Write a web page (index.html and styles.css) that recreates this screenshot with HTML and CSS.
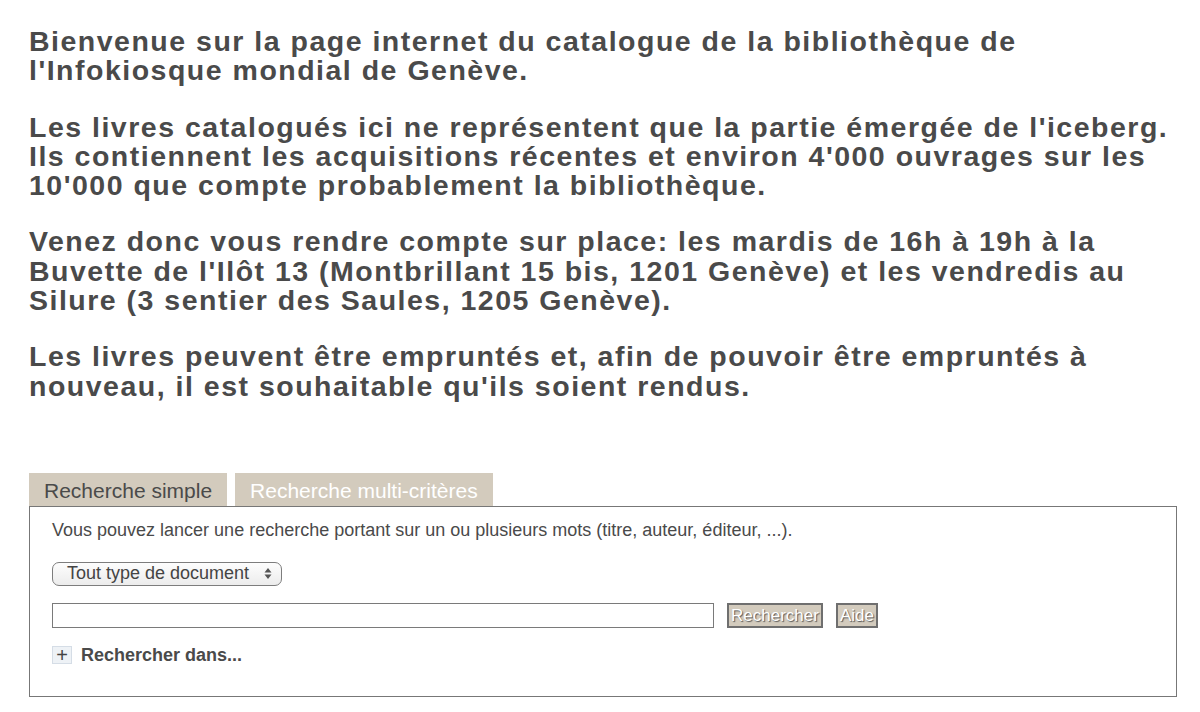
FILE: index.html
```html
<!DOCTYPE html>
<html>
<head>
    <meta charset="UTF-8">
    <link rel="stylesheet" href="styles.css">
</head>
<body>
    <div class="intro">
        <p>Bienvenue sur la page internet du catalogue de la bibliothèque de l'Infokiosque mondial de Genève.</p>
        <p>Les livres catalogués ici ne représentent que la partie émergée de l'iceberg. Ils contiennent les acquisitions récentes et environ 4'000 ouvrages sur les 10'000 que compte probablement la bibliothèque.</p>
        <p>Venez donc vous rendre compte sur place: les mardis de 16h à 19h à la Buvette de l'Ilôt 13 (Montbrillant 15 bis, 1201 Genève) et les vendredis au Silure (3 sentier des Saules, 1205 Genève).</p>
        <p>Les livres peuvent être empruntés et, afin de pouvoir être empruntés à nouveau, il est souhaitable qu'ils soient rendus.</p>
    </div>
    <div class="search">
        <!-- onglets -->
        <div class="tabs">
            <span class="tab active">Recherche simple</span>
            <span class="tab">Recherche multi-critères</span>
        </div>
        <div class="panel">
            <p class="hint">Vous pouvez lancer une recherche portant sur un ou plusieurs mots (titre, auteur, éditeur, ...).</p>
            <div class="select">
                <span>Tout type de document</span>
                <svg width="8" height="13" viewBox="0 0 8 13"><path d="M4 1 L7.5 5.5 L0.5 5.5 Z M4 12 L7.5 7.5 L0.5 7.5 Z" fill="#555"/></svg>
            </div>
            <div class="row">
                <input type="text" class="field">
                <button class="btn">Rechercher</button>
                <button class="btn">Aide</button>
            </div>
            <div class="more">
                <span class="plus">+</span>
                <span>Rechercher dans...</span>
            </div>
        </div>
    </div>
</body>
</html>
```

FILE: styles.css
```css
body,p,div,span{margin: 0;padding: 0;}
body{
    width: 1200px;box-sizing: border-box;
    padding: 27px 23px 0 29px;
    font-family: "Liberation Sans", Arial, sans-serif;
    color: #4a4a4a;background: #fff;
}

.intro p{
    font-size: 28.5px;font-weight: bold;line-height: 29.3px;
    letter-spacing: 1.5px;margin-bottom: 27px;
}
.intro p:last-child{margin-bottom: 0;}

.search{margin-top: 72px;}
.tabs{display: flex;gap: 8px;}
.tab{
    background: #d3cbbd;height: 33px;line-height: 35px;
    font-size: 21px;padding: 0 15px;color: #fff;
}
.tab.active{color: #4a4a4a;}

.panel{
    border: 1px solid #777;height: 191px;box-sizing: border-box;
    padding: 13px 22px 0;
    display: flex;flex-direction: column;align-items: flex-start;
}
.hint{font-size: 18px;line-height: 21px;}

.select{
    margin-top: 21px;width: 230px;height: 24px;box-sizing: border-box;
    border: 1px solid #7d7d7d;border-radius: 7px;
    background: linear-gradient(#fdfdfd, #ececec);
    display: flex;align-items: center;justify-content: space-between;
    padding: 0 9px 0 14px;font-size: 18px;color: #444;
}

.row{margin-top: 17px;display: flex;align-items: center;}
.field{
    width: 662px;height: 25px;box-sizing: border-box;margin: 0;
    border: 1px solid #7a7a7a;background: #fff;
}
.btn{
    margin: 0 0 0 13px;height: 25px;padding: 0 2px;
    background: #d3cbbd;border: 2px solid #6f6f6f;
    font-family: "Liberation Sans", Arial, sans-serif;
    font-size: 17px;line-height: 19px;color: #fff;text-shadow: 1px 1px 1px #555;
}

.more{
    margin-top: 17px;display: flex;align-items: center;gap: 9px;
    font-size: 18px;font-weight: bold;
}
.plus{
    width: 20px;height: 18px;box-sizing: border-box;
    border: 1px solid #d5dde6;background: #eef2f6;
    display: flex;align-items: center;justify-content: center;
    font-weight: normal;font-size: 20px;color: #444;
}
```
